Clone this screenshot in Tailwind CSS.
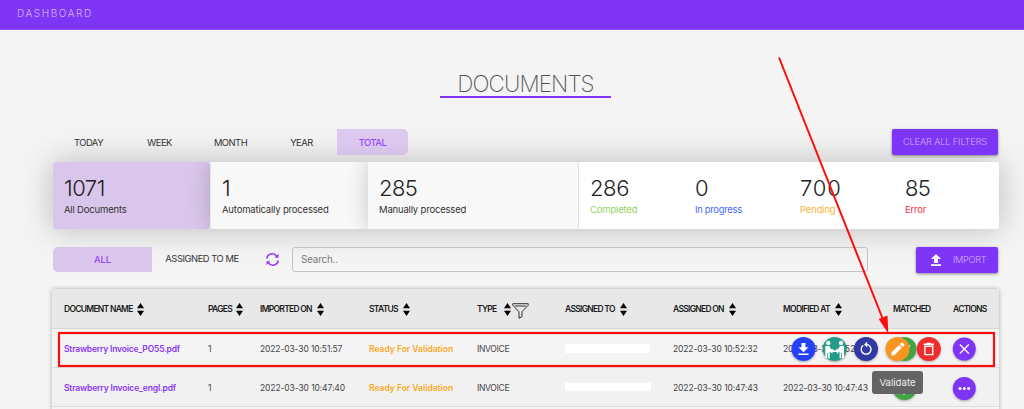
<!DOCTYPE html>
<html lang="en">
<head>
<meta charset="utf-8">
<title>Documents</title>
<script src="https://cdn.jsdelivr.net/npm/@tailwindcss/browser@4"></script>
</head>
<body class="relative h-[409px] overflow-hidden bg-[#f4f4f4] font-[Inter,sans-serif] text-[#333] whitespace-nowrap">
<svg class="hidden">
  <symbol id="sort" viewBox="0 0 7 13"><path d="M3.5 0 7 5.3H0zM0 7.7h7L3.5 13z"/></symbol>
</svg>

<header class="flex h-[30px] items-start border-b border-[#8f4ff8] bg-[#7f35f6] pl-[17px] pt-[6px] text-[10px] leading-[14px] font-light tracking-[1.6px] text-[#d9b8fc]">DASHBOARD</header>

<main class="flex flex-col pl-[53px] pr-[25px]">
  <h1 class="mt-[39px] ml-[387px] flex h-[29px] w-[171px] justify-center border-b-2 border-[#8134f7] text-[22.5px] leading-[30px] font-extralight tracking-[-0.9px] text-[#555]">DOCUMENTS</h1>

  <div class="relative z-10 mt-[31px] flex h-[26px] justify-between text-[9.4px]">
    <nav class="flex leading-[27px] tracking-[-0.5px]">
      <span class="w-[71px] text-center">TODAY</span>
      <span class="w-[71px] text-center">WEEK</span>
      <span class="w-[71px] text-center">MONTH</span>
      <span class="w-[71px] text-center">YEAR</span>
      <span class="w-[71px] rounded-r-[5px] bg-[#cfacec]/60 text-center font-medium text-[#9747ff]">TOTAL</span>
    </nav>
    <button class="mr-px h-[26px] w-[106px] rounded-[2px] bg-[#7f35f6] text-[9.2px] font-light tracking-[-0.12px] text-[#d3a8fb] shadow-[0_1px_3px_rgba(0,0,0,0.45)]">CLEAR ALL FILTERS</button>
  </div>

  <section class="mt-[7px] flex h-[67px] rounded-[2px] bg-white text-[9.5px] leading-[15px] tracking-[-0.18px] shadow-[0_0_32px_rgba(0,0,0,0.24)]">
    <div class="w-[157px] rounded-[2px] bg-[#dac6eb] pl-[11px] pt-[12px]">
      <b class="block text-[22px] leading-[28px] font-light tracking-[-0.5px] text-[#222]">1071</b>All Documents</div>
    <div class="w-[158px] rounded-[2px] border-l border-[#e8e8e8] bg-[#f8f8f8] pl-[11px] pt-[12px] shadow-[0_0_22px_rgba(0,0,0,0.2)] [clip-path:inset(0_0_0_-30px)]">
      <b class="block text-[22px] leading-[28px] font-light text-[#222]">1</b>Automatically processed</div>
    <div class="w-[210px] rounded-[2px] bg-[#f8f8f8] pl-[11px] pt-[12px] shadow-[0_0_22px_rgba(0,0,0,0.2)] [clip-path:inset(0_0_0_-30px)]">
      <b class="block text-[22px] leading-[28px] font-light tracking-[-0.6px] text-[#222]">285</b>Manually processed</div>
    <div class="flex flex-1 rounded-[2px] border-l border-[#ddd] bg-white pl-[11px] pt-[12px]">
      <div class="w-[105px] text-[#95d45f]"><b class="block text-[22px] leading-[28px] font-light tracking-[-0.4px] text-[#222]">286</b>Completed</div>
      <div class="w-[105px] text-[#4767fb]"><b class="block text-[22px] leading-[28px] font-light text-[#222]">0</b><span class="tracking-[-0.34px]">In progress</span></div>
      <div class="w-[105px] text-[#f9b23c]"><b class="block text-[22px] leading-[28px] font-light tracking-[0.8px] text-[#222]">700</b>Pending</div>
      <div class="text-[#fb3048]"><b class="block text-[22px] leading-[28px] font-light tracking-[-0.6px] text-[#222]">85</b>Error</div>
    </div>
  </section>

  <div class="relative mt-[18px] flex h-[25px] items-center text-[9.4px]">
    <span class="h-[25px] w-[99px] rounded-l-[5px] bg-[#dac6eb] text-center leading-[25px] font-medium text-[#9747ff]">ALL</span>
    <span class="w-[100px] text-center tracking-[-0.46px]">ASSIGNED TO ME</span>
    <svg class="ml-[14px] h-[13px] w-[13px]" viewBox="0 0 13 13" fill="none" stroke="#8f35f7" stroke-width="1.6"><path d="M.8 5.6A5.3 5.3 0 0 1 10.6 3.4M12.2 7.4A5.3 5.3 0 0 1 2.4 9.6"/><path d="M12.5.8v4H8.6zM.5 12.2v-4h3.9z" fill="#8f35f7" stroke="none"/></svg>
    <span class="ml-[13px] h-[25px] w-[576px] rounded-[3px] border border-[#c2c2c2] pl-[8px] text-[9.8px] leading-[24px] tracking-[-0.15px] text-[#777]">Search..</span>
    <button class="ml-[48px] flex h-[26px] w-[82px] items-center rounded-[2px] bg-[#7f35f6] pl-[15px] text-[9.2px] font-light tracking-[-0.32px] text-[#d3a8fb] shadow-[0_1px_3px_rgba(0,0,0,0.45)]">
      <svg class="mr-[12px] h-[12px] w-[10px]" viewBox="0 0 10 12" fill="#fff"><path d="M5 0 10 5H7v4H3V5H0zM0 10.3h10V12H0z"/></svg>IMPORT</button>
  </div>

  <section class="-ml-px mt-[17px] flex w-[947px] flex-col rounded-[2px] shadow-[0_0_4px_rgba(0,0,0,0.3)]">
    <div class="grid h-[40px] grid-cols-[144px_52px_109px_108px_88px_108px_110px_110px_60px_46px] items-center border-b border-[#d6d6d6] bg-[#e8e8e8] pl-[12px] pt-[2px] text-[8.5px] font-semibold tracking-[-0.72px] text-[#1c1c1c]">
      <span class="flex items-center gap-[4px]">DOCUMENT NAME<svg class="h-[13px] w-[7px]"><use href="#sort"/></svg></span>
      <span class="flex items-center gap-[4px]">PAGES<svg class="h-[13px] w-[7px]"><use href="#sort"/></svg></span>
      <span class="flex items-center gap-[5px]">IMPORTED ON<svg class="h-[13px] w-[7px]"><use href="#sort"/></svg></span>
      <span class="flex items-center gap-[5px]">STATUS<svg class="h-[13px] w-[7px]"><use href="#sort"/></svg></span>
      <span class="flex items-center">TYPE<svg class="ml-[7px] h-[13px] w-[7px]"><use href="#sort"/></svg><svg class="ml-[1px] mt-[3px] h-[16px] w-[17px]" viewBox="0 0 17 16" fill="none" stroke="#333" stroke-width="1"><path d="M.8.7h15.4v1.6L10 8.7v5L7 15.3V8.7L.8 2.3zM3 3h11"/></svg></span>
      <span class="flex items-center gap-[5px]">ASSIGNED TO<svg class="h-[13px] w-[7px]"><use href="#sort"/></svg></span>
      <span class="flex items-center gap-[5px]">ASSIGNED ON<svg class="h-[13px] w-[7px]"><use href="#sort"/></svg></span>
      <span class="flex items-center gap-[5px]">MODIFIED AT<svg class="h-[13px] w-[7px]"><use href="#sort"/></svg></span>
      <span>MATCHED</span>
      <span>ACTIONS</span>
    </div>
    <div class="grid h-[39px] grid-cols-[144px_52px_109px_108px_88px_108px_110px_110px_60px_46px] items-center border-b border-[#dedede] bg-[#f4f4f4] pl-[12px] pt-[2px] text-[8.5px] tracking-[-0.12px] text-[#444]">
      <span class="font-semibold tracking-[-0.2px] text-[#8c35f7]">Strawberry Invoice_PO55.pdf</span>
      <span>1</span><span>2022-03-30 10:51:57</span>
      <span class="font-semibold tracking-[0px] text-[#fba924]">Ready For Validation</span>
      <span class="tracking-[-0.3px]">INVOICE</span>
      <span class="mb-[2px] h-[9px] w-[85px] bg-white"></span>
      <span>2022-03-30 10:52:32</span><span>2022-03-30 10:52:32</span>
    </div>
    <div class="grid h-[39px] grid-cols-[144px_52px_109px_108px_88px_108px_110px_110px_60px_46px] items-center border-b border-[#dedede] bg-[#f1f1f1] pl-[12px] pt-[2px] text-[8.5px] tracking-[-0.1px] text-[#444]">
      <span class="font-semibold tracking-[-0.16px] text-[#8c35f7]">Strawberry Invoice_engl.pdf</span>
      <span>1</span><span>2022-03-30 10:47:40</span>
      <span class="font-semibold tracking-[0px] text-[#fba924]">Ready For Validation</span>
      <span class="tracking-[-0.3px]">INVOICE</span>
      <span class="mb-[2px] h-[8px] w-[86px] bg-white"></span>
      <span>2022-03-30 10:47:43</span><span>2022-03-30 10:47:43</span>
    </div>
    <div class="h-[20px] bg-[#f4f4f4]"></div>
  </section>
</main>

<!-- Floating row actions -->
<svg class="absolute left-0 top-0 z-20 h-[409px] w-[1024px] drop-shadow-[0_1px_1px_rgba(0,0,0,0.3)]" viewBox="0 0 1024 409">
  <g fill="#43a542"><circle cx="904.5" cy="349" r="12"/><circle cx="904.5" cy="388" r="12"/></g>
  <path d="m899.5 349 3.5 3.5 7-7M900.5 390.5l3.5 3.5 7-7" fill="none" stroke="#d9efd8" stroke-width="1.7"/>
  <circle cx="803.5" cy="349" r="12" fill="#2541fb"/>
  <path d="M801.5 343h4v4.2h3l-5 5-5-5h3zM798.5 353.5h10v1.4h-10z" fill="#fff"/>
  <circle cx="834.7" cy="349" r="12" fill="#249a88"/>
  <g fill="#fff"><circle cx="828.3" cy="343" r="2.2"/><circle cx="841" cy="343" r="2.2"/><path d="M825.3 346h4l2 3.4h2.4v1.7h-3.5l-.5 1v6.2h-1.6V353h-.8v5h-2zM844 346h-4l-2 3.4h-2.4v1.7h3.5l.5 1v6.2h1.6V353h.8v5h2z"/><path d="m829.5 351.2 3-2.6v1.8h4.4v-1.8l3 2.6-3 2.6V352h-4.4v1.8z"/></g>
  <circle cx="866" cy="349" r="12" fill="#2f38a3"/>
  <path d="M863.2 345.3a4.9 4.9 0 1 0 3.6-.9" fill="none" stroke="#fff" stroke-width="1.4"/><path d="m867.2 341.4-3.2 3 3.2 3z" fill="#fff"/>
  <circle cx="897.5" cy="349" r="12" fill="#fa9522"/>
  <path d="M891.4 355.4v-2.8l7.6-7.6 2.8 2.8-7.6 7.6zM899.8 344.2l1.5-1.5q.7-.6 1.3 0l1.6 1.6q.6.6 0 1.3l-1.5 1.5z" fill="#fff"/>
  <circle cx="928.8" cy="349" r="12" fill="#f02c2f"/>
  <path d="M924.9 346.3h7.8v8.3h-7.8zM923.6 344.3h10.4M926.8 343.4h4" fill="none" stroke="#fff" stroke-width="1.4"/>
  <g fill="#7f35f6"><circle cx="964.3" cy="349" r="11.5"/><circle cx="964.3" cy="388.5" r="11.5"/></g>
  <path d="m959.8 344.5 9 9m0-9-9 9" stroke="#fff" stroke-width="1.3"/>
  <g fill="#fff"><circle cx="960" cy="388.5" r="1.5"/><circle cx="964.3" cy="388.5" r="1.5"/><circle cx="968.6" cy="388.5" r="1.5"/></g>
</svg>
<div class="absolute left-[872px] top-[371px] z-30 h-[23px] w-[51px] rounded-[3px] bg-[#646464] text-center text-[9.6px] leading-[23px] text-[#eee]">Validate</div>

<!-- Annotation: highlighted row and pointer -->
<svg class="absolute left-0 top-0 z-40 h-[409px] w-[1024px]" viewBox="0 0 1024 409">
  <rect x="59" y="333" width="935" height="33" fill="none" stroke="#fb0f0c" stroke-width="2.2"/>
  <path d="M779 57.5 884 322" stroke="#fb0f0c" stroke-width="2"/>
  <path d="m888.3 333.5-9.6-14.6 8.8-3.4z" fill="#fb0f0c"/>
</svg>
</body>
</html>
